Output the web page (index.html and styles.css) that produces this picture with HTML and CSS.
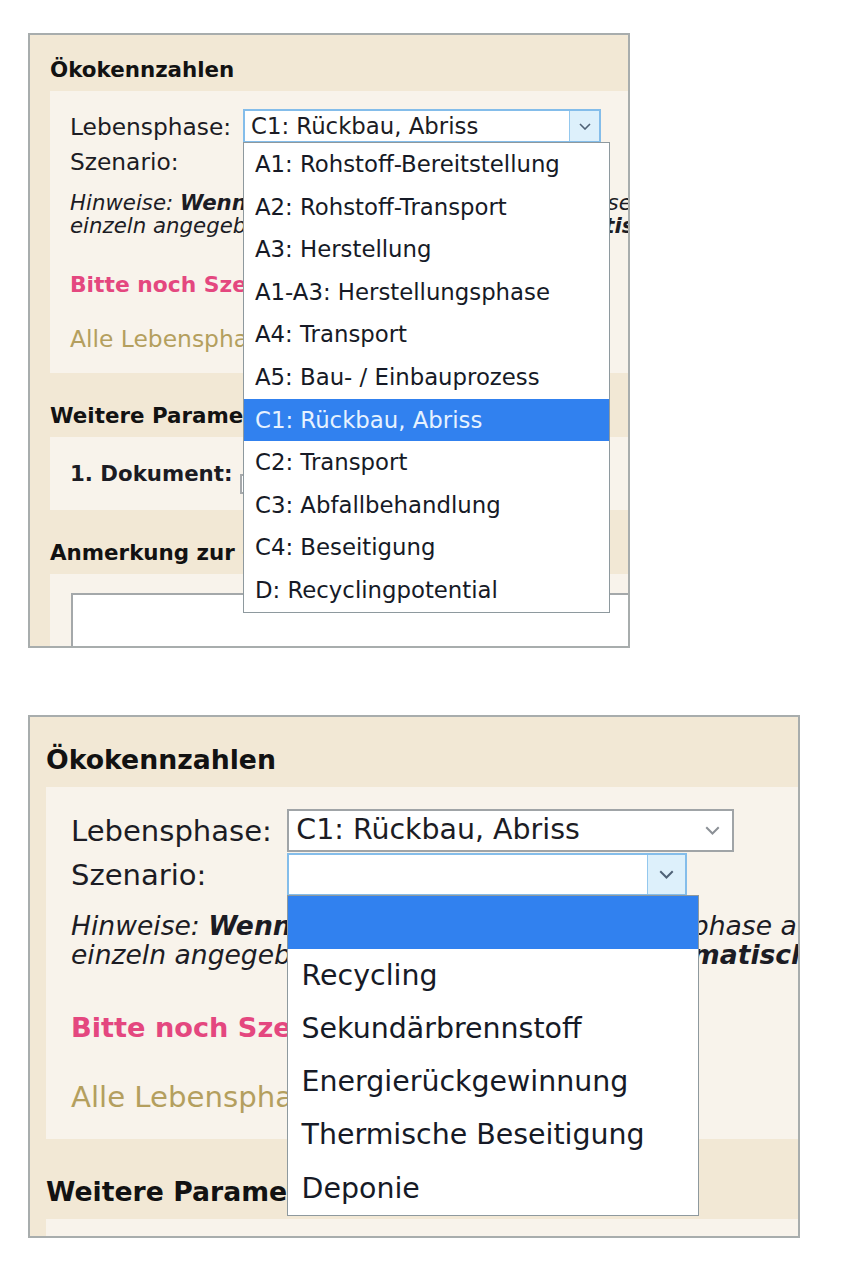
FILE: index.html
```html
<!DOCTYPE html>
<html lang="de">
<head>
<meta charset="utf-8">
<title>Ökokennzahlen</title>
<link rel="stylesheet" href="styles.css">
</head>
<body>
<div class="page">

  <section class="panel panel--phase">
    <h2 class="section-title">Ökokennzahlen</h2>
    <div class="section-body body-main">
      <div class="field-row">
        <span class="label">Lebensphase:</span>
        <div class="select select--wide select--open">
          <span class="select-value">C1: Rückbau, Abriss</span>
          <span class="select-btn"><svg class="chev" viewBox="0 0 12 7"><polyline points="1,1 6,6 11,1"/></svg></span>
          <ul class="options options--phase">
            <li class="option">A1: Rohstoff-Bereitstellung</li>
            <li class="option">A2: Rohstoff-Transport</li>
            <li class="option">A3: Herstellung</li>
            <li class="option">A1-A3: Herstellungsphase</li>
            <li class="option">A4: Transport</li>
            <li class="option">A5: Bau- / Einbauprozess</li>
            <li class="option is-selected">C1: Rückbau, Abriss</li>
            <li class="option">C2: Transport</li>
            <li class="option">C3: Abfallbehandlung</li>
            <li class="option">C4: Beseitigung</li>
            <li class="option">D: Recyclingpotential</li>
          </ul>
        </div>
      </div>
      <div class="field-row field-row--next">
        <span class="label">Szenario:</span>
        <div class="select select--narrow">
          <span class="select-value"></span>
          <span class="select-btn"><svg class="chev" viewBox="0 0 12 7"><polyline points="1,1 6,6 11,1"/></svg></span>
        </div>
      </div>
      <p class="hint">Hinweise: <b>Wenn möglich,</b> sollte diese Lebensphase auch<br>einzeln angegeben werden, Summe wird <b>automatisch</b> berechnet.</p>
      <p class="warn">Bitte noch Szenario auswählen!</p>
      <p class="note">Alle Lebensphasen wurden ausgefüllt.</p>
    </div>
    <h2 class="section-title section-title--spaced">Weitere Parameter</h2>
    <div class="section-body body-doc">
      <span class="doc-label">1. Dokument:</span>
      <span class="doc-input"></span>
    </div>
    <h2 class="section-title section-title--spaced">Anmerkung zur Ökobilanz</h2>
    <div class="section-body body-remark">
      <div class="textarea"></div>
    </div>
  </section>

  <section class="panel panel--scenario">
    <h2 class="section-title">Ökokennzahlen</h2>
    <div class="section-body body-main">
      <div class="field-row">
        <span class="label">Lebensphase:</span>
        <div class="select select--wide">
          <span class="select-value">C1: Rückbau, Abriss</span>
          <span class="select-btn"><svg class="chev" viewBox="0 0 12 7"><polyline points="1,1 6,6 11,1"/></svg></span>
        </div>
      </div>
      <div class="field-row field-row--next">
        <span class="label">Szenario:</span>
        <div class="select select--narrow select--open">
          <span class="select-value"></span>
          <span class="select-btn"><svg class="chev" viewBox="0 0 12 7"><polyline points="1,1 6,6 11,1"/></svg></span>
          <ul class="options options--scenario">
            <li class="option is-selected"></li>
            <li class="option">Recycling</li>
            <li class="option">Sekundärbrennstoff</li>
            <li class="option">Energierückgewinnung</li>
            <li class="option">Thermische Beseitigung</li>
            <li class="option">Deponie</li>
          </ul>
        </div>
      </div>
      <p class="hint">Hinweise: <b>Wenn möglich,</b> sollte diese Lebensphase auch<br>einzeln angegeben werden, Summe wird <b>automatisch</b> berechnet.</p>
      <p class="warn">Bitte noch Szenario auswählen!</p>
      <p class="note">Alle Lebensphasen wurden ausgefüllt.</p>
    </div>
    <h2 class="section-title section-title--spaced">Weitere Parameter</h2>
    <div class="section-body body-doc">
      <span class="doc-label">1. Dokument:</span>
      <span class="doc-input"></span>
    </div>
  </section>

</div>
</body>
</html>
```

FILE: styles.css
```css
* {
  box-sizing: border-box;
}

body {
  margin: 0;
  background: #ffffff;
  font-family: "DejaVu Sans", Verdana, sans-serif;
  color: #1c1c24;
}

.page {
  display: flex;
  flex-direction: column;
  align-items: flex-start;
  gap: 67px;
  padding: 33px 0 0 28px;
}

/* ---------- panel frame (screenshot crop) ---------- */
.panel {
  --u: 1px;
  position: relative;
  overflow: hidden;
  border: 2px solid #a8adad;
  background: #f2e8d5;
  font-size: calc(22.8 * var(--u));
}

.panel--phase {
  width: 602px;
  height: 615px;
  padding-left: 20px;
}

.panel--scenario {
  --u: 1.248px;
  width: 772px;
  height: 523px;
  padding-left: 16px;
}

/* ---------- headings ---------- */
.section-title {
  margin: 0;
  height: calc(56 * var(--u));
  padding-top: calc(24 * var(--u));
  font-size: calc(21.4 * var(--u));
  line-height: 1;
  font-weight: bold;
  color: #121212;
  white-space: nowrap;
}

.section-title--spaced {
  margin-top: calc(8 * var(--u));
}

/* ---------- light content boxes ---------- */
.section-body {
  background: #f8f3eb;
  padding-left: calc(20 * var(--u));
}

.body-main {
  padding-top: calc(18 * var(--u));
  padding-bottom: calc(22 * var(--u));
}

.field-row {
  display: flex;
  align-items: center;
  height: calc(34 * var(--u));
}

.field-row--next {
  margin-top: calc(1.3 * var(--u));
}

.label {
  flex: 0 0 auto;
  width: calc(173 * var(--u));
  font-size: calc(23.3 * var(--u));
  white-space: nowrap;
}

/* ---------- select boxes ---------- */
.select {
  position: relative;
  display: flex;
  height: calc(34 * var(--u));
  background: #ffffff;
  border: 2px solid #a0a4a7;
}

.select--wide {
  width: calc(358 * var(--u));
}

.select--narrow {
  width: calc(320.5 * var(--u));
}

.select-value {
  flex: 1 1 auto;
  padding-left: calc(6 * var(--u));
  line-height: calc(30 * var(--u));
  white-space: nowrap;
  overflow: hidden;
}

.select-btn {
  flex: 0 0 auto;
  width: calc(30 * var(--u));
  display: flex;
  align-items: center;
  justify-content: center;
  color: #8b9096;
}

.chev {
  width: calc(12 * var(--u));
  height: calc(7 * var(--u));
  fill: none;
  stroke: currentColor;
  stroke-width: 1.6;
}

.select--open {
  border-color: #84bdea;
}

.select--open .select-btn {
  background: #ddf0fb;
  border-left: 1px solid #94c8ee;
  color: #4f6276;
}

/* ---------- open dropdown lists ---------- */
.options {
  position: absolute;
  top: calc(100% + 1px);
  left: -2px;
  z-index: 2;
  margin: 0;
  padding: 0;
  list-style: none;
  background: #ffffff;
  border: 1px solid #8e999e;
}

.options--phase {
  width: calc(367 * var(--u));
}

.options--scenario {
  width: calc(330 * var(--u));
}

.option {
  height: calc(42.6 * var(--u));
  line-height: calc(42.6 * var(--u));
  padding-left: calc(11 * var(--u));
  white-space: nowrap;
  color: #161a26;
}

.option.is-selected {
  background: #3181ef;
  color: #e6f2ff;
}

/* ---------- texts ---------- */
.hint {
  margin: calc(13 * var(--u)) 0 0;
  font-size: calc(21.3 * var(--u));
  line-height: calc(23 * var(--u));
  font-style: italic;
  white-space: nowrap;
}

.hint b {
  font-weight: bold;
}

.warn {
  margin: calc(36 * var(--u)) 0 0;
  font-size: calc(21.8 * var(--u));
  line-height: calc(23 * var(--u));
  font-weight: bold;
  color: #e4477f;
  white-space: nowrap;
}

.note {
  margin: calc(32 * var(--u)) 0 0;
  font-size: calc(23.4 * var(--u));
  line-height: calc(23 * var(--u));
  color: #b49f5e;
  white-space: nowrap;
}

/* ---------- document row ---------- */
.body-doc {
  display: flex;
  align-items: center;
  height: calc(73 * var(--u));
}

.doc-label {
  flex: 0 0 auto;
  width: calc(170 * var(--u));
  font-size: calc(21.3 * var(--u));
  font-weight: bold;
  white-space: nowrap;
}

.doc-input {
  flex: 0 0 auto;
  width: calc(300 * var(--u));
  height: calc(20 * var(--u));
  margin-top: calc(20 * var(--u));
  background: #ffffff;
  border: 2px solid #a6a9ab;
}

/* ---------- remark box ---------- */
.body-remark {
  padding-top: calc(19 * var(--u));
  height: calc(160 * var(--u));
}

.textarea {
  margin-left: calc(1 * var(--u));
  width: calc(800 * var(--u));
  height: calc(120 * var(--u));
  background: #ffffff;
  border: 2px solid #a4a8aa;
}
```
